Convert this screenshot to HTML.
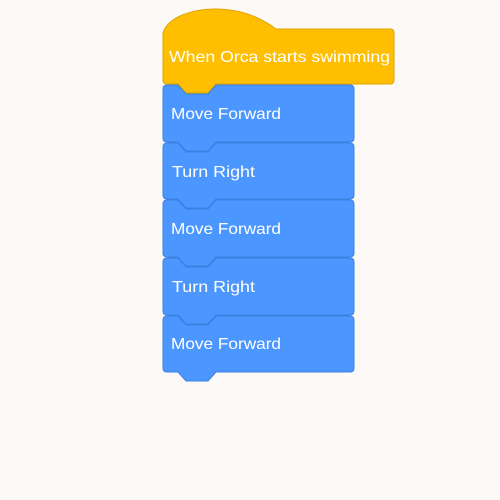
<!DOCTYPE html>
<html><head><meta charset="utf-8"><style>
html,body{margin:0;padding:0;background:#fcf9f7;width:500px;height:500px;overflow:hidden}
svg{display:block}
text{font-family:"Liberation Sans",sans-serif;font-size:16px;fill:#fff}
</style></head><body>
<svg width="500" height="500" viewBox="0 0 500 500">
<rect width="500" height="500" fill="#fcf9f7"/>
<!-- hat block -->
<path d="M163,33 C168,16 195,9 215,9 C240,9 260,17 276,29 L390,29 Q394,29 394,33 L394,80 Q394,84 390,84 L216,84 L208,93 L186,93 L178,84 L167,84 Q163,84 163,80 Z" fill="#ffbf00" stroke="#e0a400" stroke-width="1"/>
<text x="169" y="62" textLength="221" lengthAdjust="spacingAndGlyphs">When Orca starts swimming</text>
<!-- blue blocks -->
<g fill="#4c97ff" stroke="#3a80e0" stroke-width="1">
<path d="M163,89 Q163,85 167,85 L178,85 L186,94 L208,94 L216,85 L350,85 Q354,85 354,89 L354,138 Q354,142 350,142 L216,142 L208,151 L186,151 L178,142 L167,142 Q163,142 163,138 Z"/>
<path d="M163,147 Q163,143 167,143 L178,143 L186,152 L208,152 L216,143 L350,143 Q354,143 354,147 L354,195 Q354,199 350,199 L216,199 L208,208 L186,208 L178,199 L167,199 Q163,199 163,195 Z"/>
<path d="M163,204 Q163,200 167,200 L178,200 L186,209 L208,209 L216,200 L350,200 Q354,200 354,204 L354,253 Q354,257 350,257 L216,257 L208,266 L186,266 L178,257 L167,257 Q163,257 163,253 Z"/>
<path d="M163,262 Q163,258 167,258 L178,258 L186,267 L208,267 L216,258 L350,258 Q354,258 354,262 L354,311 Q354,315 350,315 L216,315 L208,324 L186,324 L178,315 L167,315 Q163,315 163,311 Z"/>
<path d="M163,320 Q163,316 167,316 L178,316 L186,325 L208,325 L216,316 L350,316 Q354,316 354,320 L354,368 Q354,372 350,372 L216,372 L208,381 L186,381 L178,372 L167,372 Q163,372 163,368 Z"/>
</g>
<text x="171" y="119" textLength="110" lengthAdjust="spacingAndGlyphs">Move Forward</text>
<text x="172" y="177" textLength="83" lengthAdjust="spacingAndGlyphs">Turn Right</text>
<text x="171" y="234" textLength="110" lengthAdjust="spacingAndGlyphs">Move Forward</text>
<text x="172" y="292" textLength="83" lengthAdjust="spacingAndGlyphs">Turn Right</text>
<text x="171" y="349" textLength="110" lengthAdjust="spacingAndGlyphs">Move Forward</text>
</svg>
</body></html>
